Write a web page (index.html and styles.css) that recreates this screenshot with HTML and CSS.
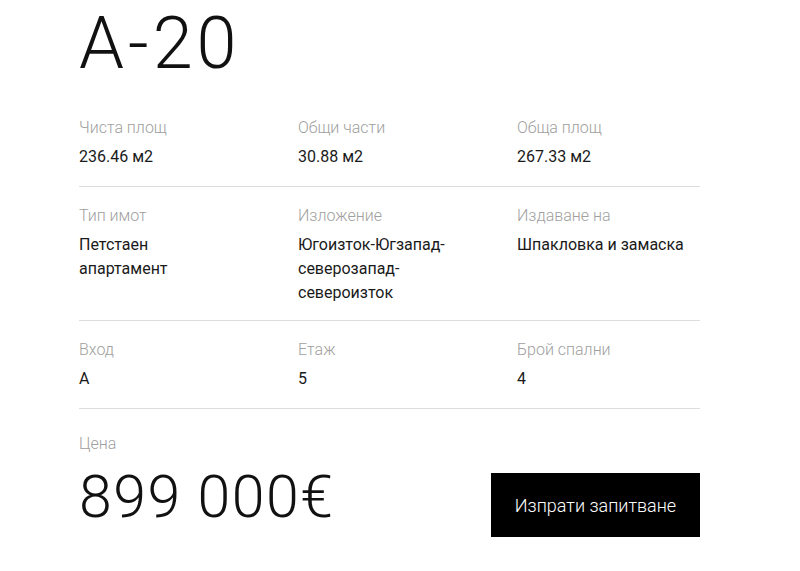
FILE: index.html
```html
<!DOCTYPE html>
<html lang="bg">
<head>
    <meta charset="UTF-8">
    <meta name="viewport" content="width=device-width, initial-scale=1.0">
    <title>A-20</title>
    <link rel="stylesheet" href="styles.css">
</head>
<body>

    <div class="property">
        <h1 class="title">A-20</h1>

        <!-- Areas -->
        <div class="row row-first">
            <div class="cell">
                <p class="label">Чиста площ</p>
                <p class="value">236.46 м2</p>
            </div>
            <div class="cell">
                <p class="label">Общи части</p>
                <p class="value">30.88 м2</p>
            </div>
            <div class="cell">
                <p class="label">Обща площ</p>
                <p class="value">267.33 м2</p>
            </div>
        </div>

        <!-- Type and orientation -->
        <div class="row row-tall">
            <div class="cell cell-narrow">
                <p class="label">Тип имот</p>
                <p class="value">Петстаен апартамент</p>
            </div>
            <div class="cell">
                <p class="label">Изложение</p>
                <p class="value">Югоизток-Югзапад-северозапад-североизток</p>
            </div>
            <div class="cell">
                <p class="label">Издаване на</p>
                <p class="value">Шпакловка и замаска</p>
            </div>
        </div>

        <!-- Entrance, floor, bedrooms -->
        <div class="row">
            <div class="cell">
                <p class="label">Вход</p>
                <p class="value">A</p>
            </div>
            <div class="cell">
                <p class="label">Етаж</p>
                <p class="value">5</p>
            </div>
            <div class="cell">
                <p class="label">Брой спални</p>
                <p class="value">4</p>
            </div>
        </div>

        <!-- Price -->
        <div class="price-block">
            <p class="label">Цена</p>
            <div class="price-line">
                <span class="price">899 000€</span>
                <button class="btn">Изпрати запитване</button>
            </div>
        </div>
    </div>

</body>
</html>
```

FILE: styles.css
```css
* {
    margin: 0;
    padding: 0;
    box-sizing: border-box;
}

body {
    font-family: 'Roboto', 'Liberation Sans', sans-serif;
    background: #fff;
    color: #111;
}

.property {
    width: 621px;
    margin-left: 79px;
}

.title {
    font-size: 72px;
    font-weight: 300;
    line-height: 80px;
    margin-top: 4px;
    margin-bottom: 16px;
    color: #111;
    letter-spacing: 4px;
}

.row {
    display: grid;
    grid-template-columns: 183px 183px 183px;
    column-gap: 36px;
    padding: 17px 0;
    border-bottom: 1px solid #ddd;
}

.row-first {
    padding-top: 16px;
}

.row-tall {
    padding-bottom: 15px;
}

.cell-narrow .value {
    max-width: 150px;
}

.label {
    font-size: 16px;
    line-height: 24px;
    font-weight: 300;
    color: #a0a0a0;
    margin-bottom: 5px;
}

.value {
    font-size: 16px;
    line-height: 24px;
    font-weight: 400;
    color: #1a1a1a;
}

.price-block {
    padding-top: 23px;
}

.price-line {
    display: flex;
    justify-content: space-between;
    align-items: flex-start;
    margin-top: 6px;
}

.price {
    font-size: 59px;
    font-weight: 300;
    line-height: 70px;
    letter-spacing: 1.5px;
    color: #111;
}

.btn {
    width: 209px;
    height: 64px;
    margin-top: 11px;
    background-color: #000;
    color: #fff;
    border: none;
    font-family: 'Roboto', 'Liberation Sans', sans-serif;
    font-size: 18px;
    font-weight: 300;
    cursor: pointer;
}
```
